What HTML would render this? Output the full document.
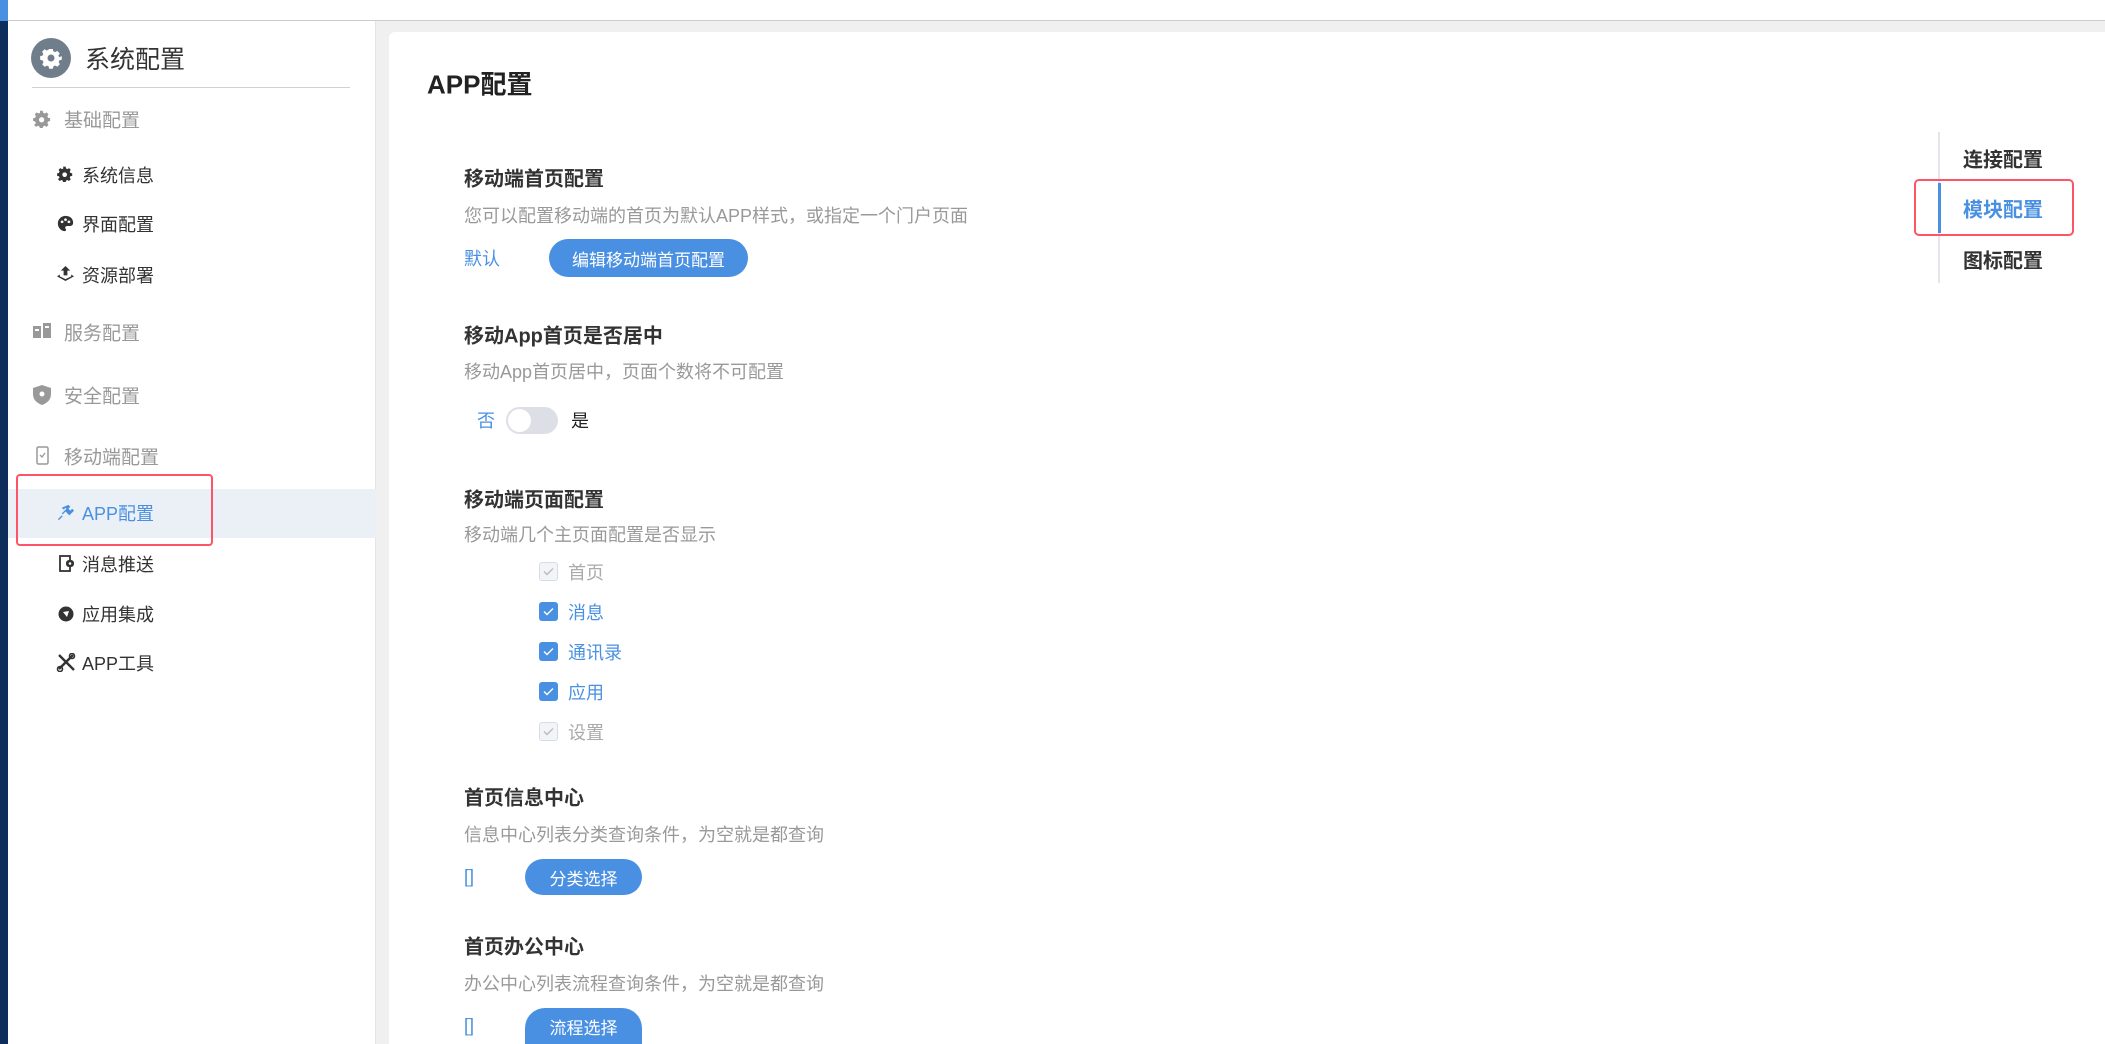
<!DOCTYPE html>
<html><head><meta charset="utf-8"><style>
*{margin:0;padding:0;box-sizing:border-box}
html{width:2105px;height:1044px;overflow:hidden}
body{width:2105px;height:1044px;overflow:hidden;background:#f0f0f0;font-family:"Liberation Sans","Noto Sans CJK SC",sans-serif;position:relative}
.a{position:absolute;white-space:nowrap}
.top{left:0;top:0;width:2105px;height:21px;background:#fff;border-bottom:1px solid #ccc}
.strip{left:0;top:0;width:8px;height:1044px;background:#0d2d5a}
.strip2{left:0;top:0;width:8px;height:21px;background:#4a90e2}
.side{left:8px;top:21px;width:368px;height:1023px;background:#fff;border-right:1px solid #e4e4e4}
.card{left:389px;top:32px;width:1716px;height:1012px;background:#fff;border-radius:6px 0 0 0}
.grp{font-size:19px;color:#999;transform:translateY(-50%)}
.sub{font-size:18px;color:#333;transform:translateY(-50%)}
.h{font-size:20px;font-weight:bold;color:#333;transform:translateY(-50%)}
.d{font-size:18px;color:#999;transform:translateY(-50%)}
.btn{background:#4a90e2;color:#fff;font-size:17px;border-radius:20px;display:flex;align-items:center;justify-content:center}
.cb{width:19px;height:19px;border-radius:3px;left:539px}
.cb.on{background:#4a90e2}
.cb.off{background:#f2f4fa;border:1px solid #d8dce4}
.cl{left:568px;font-size:18px;transform:translateY(-50%)}
.nav{font-size:20px;font-weight:bold;color:#333;transform:translateY(-50%)}
</style></head><body>
<div class="a top"></div>
<div class="a side"></div>
<div class="a strip"></div><div class="a strip2"></div>
<div class="a card"></div>

<div class="a" style="left:31px;top:38px;width:40px;height:40px;border-radius:50%;background:#6f7e8a"></div>
<svg class="a" style="left:39px;top:46px" width="24" height="24" viewBox="0 0 24 24"><path fill="#fff" d="M10 2h4l.6 2.6 2 .9 2.3-1.4 2.8 2.8-1.4 2.3.9 2L24 10v4l-2.6.6-.9 2 1.4 2.3-2.8 2.8-2.3-1.4-2 .9L14 24h-4l-.6-2.6-2-.9-2.3 1.4-2.8-2.8 1.4-2.3-.9-2L0 14v-4l2.6-.6.9-2L2.1 5.1l2.8-2.8 2.3 1.4 2-.9z" transform="scale(.9) translate(1.3 1.3)"/><circle cx="12" cy="12" r="3.5" fill="#6f7e8a"/></svg>
<div class="a" style="left:85px;top:58px;font-size:25px;color:#333;transform:translateY(-50%)">系统配置</div>
<div class="a" style="left:32px;top:87px;width:318px;height:1px;background:#d0d0d0"></div>

<svg class="a" style="left:33px;top:110px" width="18" height="18" viewBox="0 0 24 24"><path fill="#999" d="M10 1h4l.7 3 2.3 1 2.6-1.6 2.8 2.8L20.8 9l1 2.3 3 .7v4l-3 .7-1 2.3 1.6 2.6-2.8 2.8-2.6-1.6-2.3 1-.7 3h-4l-.7-3-2.3-1-2.6 1.6-2.8-2.8L4.2 19l-1-2.3-3-.7v-4l3-.7 1-2.3L2.6 6.2l2.8-2.8L8 5l2.3-1z" transform="scale(.92)"/><circle cx="11.5" cy="13" r="3.5" fill="#fff"/></svg>
<div class="a grp" style="left:64px;top:119px">基础配置</div>
<svg class="a" style="left:57px;top:166px" width="16" height="16" viewBox="0 0 24 24"><path fill="#333" d="M10 1h4l.7 3 2.3 1 2.6-1.6 2.8 2.8L20.8 9l1 2.3 3 .7v4l-3 .7-1 2.3 1.6 2.6-2.8 2.8-2.6-1.6-2.3 1-.7 3h-4l-.7-3-2.3-1-2.6 1.6-2.8-2.8L4.2 19l-1-2.3-3-.7v-4l3-.7 1-2.3L2.6 6.2l2.8-2.8L8 5l2.3-1z" transform="scale(.92)"/><circle cx="11.5" cy="13" r="3.5" fill="#fff"/></svg>
<div class="a sub" style="left:82px;top:175px">系统信息</div>
<svg class="a" style="left:57px;top:215px" width="17" height="17" viewBox="0 0 20 20"><path fill="#333" d="M10 1C5 1 1 5 1 10s4 9 8 9c2 0 2-2 1-3s0-3 2-3h3c3 0 4-2 4-4 0-5-4-8-9-8z"/><circle cx="6" cy="8" r="1.6" fill="#fff"/><circle cx="10" cy="5.5" r="1.6" fill="#fff"/><circle cx="14" cy="8" r="1.6" fill="#fff"/></svg>
<div class="a sub" style="left:82px;top:224px">界面配置</div>
<svg class="a" style="left:56px;top:265px" width="19" height="17" viewBox="0 0 20 18"><path fill="#333" d="M10 1l5 5h-3v5H8V6H5z M1 12l3-2v2l6 3 6-3v-2l3 2-9 5z"/></svg>
<div class="a sub" style="left:82px;top:275px">资源部署</div>
<svg class="a" style="left:33px;top:322px" width="18" height="17" viewBox="0 0 18 17"><rect x="0" y="4" width="8" height="12" fill="#999"/><rect x="10" y="1" width="8" height="15" fill="#999"/><rect x="2" y="7" width="4" height="2" fill="#fff"/><rect x="12" y="4" width="4" height="2" fill="#fff"/></svg>
<div class="a grp" style="left:64px;top:332px">服务配置</div>
<svg class="a" style="left:33px;top:385px" width="18" height="20" viewBox="0 0 18 20"><path fill="#999" d="M9 0l9 3v6c0 6-4 9-9 11C4 18 0 15 0 9V3z"/><circle cx="9" cy="9" r="2.5" fill="#fff"/></svg>
<div class="a grp" style="left:64px;top:395px">安全配置</div>
<svg class="a" style="left:36px;top:446px" width="13" height="19" viewBox="0 0 13 19"><rect x="1" y="1" width="11" height="17" rx="1.5" fill="none" stroke="#999" stroke-width="1.5"/><path d="M4 9l2 2 3-4" stroke="#999" fill="none" stroke-width="1.3"/></svg>
<div class="a grp" style="left:64px;top:456px">移动端配置</div>

<div class="a" style="left:8px;top:489px;width:368px;height:49px;background:#ebf0f7"></div>
<div class="a" style="left:16px;top:474px;width:197px;height:72px;border:2.5px solid #ff5468;border-radius:4px"></div>
<svg class="a" style="left:57px;top:503px" width="19" height="19" viewBox="0 0 20 20"><path fill="#4a90e2" d="M12 2l2 2-2 2 2 2 2-2 2 2-4 4-1 1-4-4-4 4 1 1-4 4-1-1 4-4 1-1-1-1 4-4 1-1-1-1-2 2-2-2z"/></svg>
<div class="a sub" style="left:82px;top:513px;color:#4a90e2">APP配置</div>
<svg class="a" style="left:59px;top:555px" width="16" height="17" viewBox="0 0 16 17"><rect x="1" y="1" width="10" height="15" fill="none" stroke="#333" stroke-width="1.8"/><rect x="7" y="5" width="8" height="7" rx="3" fill="#333"/><circle cx="11" cy="8.5" r="1.3" fill="#fff"/></svg>
<div class="a sub" style="left:82px;top:564px">消息推送</div>
<svg class="a" style="left:58px;top:606px" width="16" height="16" viewBox="0 0 16 16"><circle cx="8" cy="8" r="7.5" fill="#333"/><path d="M5 6l6-1-2 6z" fill="#fff"/></svg>
<div class="a sub" style="left:82px;top:614px">应用集成</div>
<svg class="a" style="left:56px;top:653px" width="20" height="19" viewBox="0 0 20 19"><path stroke="#333" stroke-width="2.4" d="M3 2l15 15M17 2L3 16" fill="none"/><circle cx="4" cy="16" r="2.5" fill="none" stroke="#333" stroke-width="1.6"/><circle cx="16" cy="3" r="2.5" fill="none" stroke="#333" stroke-width="1.6"/></svg>
<div class="a sub" style="left:82px;top:663px">APP工具</div>

<div class="a" style="left:427px;top:83px;font-size:26px;font-weight:bold;color:#222;transform:translateY(-50%)">APP配置</div>

<div class="a h" style="left:464px;top:177px">移动端首页配置</div>
<div class="a d" style="left:464px;top:215px">您可以配置移动端的首页为默认APP样式，或指定一个门户页面</div>
<div class="a d" style="left:464px;top:258px;color:#4a90e2">默认</div>
<div class="a btn" style="left:549px;top:239px;width:199px;height:38px">编辑移动端首页配置</div>

<div class="a h" style="left:464px;top:334px">移动App首页是否居中</div>
<div class="a d" style="left:464px;top:371px">移动App首页居中，页面个数将不可配置</div>
<div class="a d" style="left:477px;top:420px;color:#4a90e2">否</div>
<div class="a" style="left:506px;top:407px;width:52px;height:27px;border-radius:14px;background:#dcdfe6"></div>
<div class="a" style="left:508px;top:409px;width:23px;height:23px;border-radius:50%;background:#fff"></div>
<div class="a d" style="left:571px;top:420px;color:#222">是</div>

<div class="a h" style="left:464px;top:498px">移动端页面配置</div>
<div class="a d" style="left:464px;top:534px">移动端几个主页面配置是否显示</div>

<div class="a cb off" style="top:562px"></div><svg class="a" style="left:543px;top:567px" width="11" height="9" viewBox="0 0 11 9"><path d="M1 4.5l3 3 6-6" stroke="#bbb" stroke-width="1.4" fill="none"/></svg>
<div class="a cl" style="top:572px;color:#aaa">首页</div>
<div class="a cb on" style="top:602px"></div><svg class="a" style="left:543px;top:607px" width="11" height="9" viewBox="0 0 11 9"><path d="M1 4.5l3 3 6-6" stroke="#fff" stroke-width="1.4" fill="none"/></svg>
<div class="a cl" style="top:612px;color:#4a90e2">消息</div>
<div class="a cb on" style="top:642px"></div><svg class="a" style="left:543px;top:647px" width="11" height="9" viewBox="0 0 11 9"><path d="M1 4.5l3 3 6-6" stroke="#fff" stroke-width="1.4" fill="none"/></svg>
<div class="a cl" style="top:652px;color:#4a90e2">通讯录</div>
<div class="a cb on" style="top:682px"></div><svg class="a" style="left:543px;top:687px" width="11" height="9" viewBox="0 0 11 9"><path d="M1 4.5l3 3 6-6" stroke="#fff" stroke-width="1.4" fill="none"/></svg>
<div class="a cl" style="top:692px;color:#4a90e2">应用</div>
<div class="a cb off" style="top:722px"></div><svg class="a" style="left:543px;top:727px" width="11" height="9" viewBox="0 0 11 9"><path d="M1 4.5l3 3 6-6" stroke="#bbb" stroke-width="1.4" fill="none"/></svg>
<div class="a cl" style="top:732px;color:#aaa">设置</div>

<div class="a h" style="left:464px;top:796px">首页信息中心</div>
<div class="a d" style="left:464px;top:834px">信息中心列表分类查询条件，为空就是都查询</div>
<div class="a d" style="left:464px;top:877px;color:#4a90e2">[]</div>
<div class="a btn" style="left:525px;top:859px;width:117px;height:36px">分类选择</div>

<div class="a h" style="left:464px;top:945px">首页办公中心</div>
<div class="a d" style="left:464px;top:983px">办公中心列表流程查询条件，为空就是都查询</div>
<div class="a d" style="left:464px;top:1026px;color:#4a90e2">[]</div>
<div class="a btn" style="left:525px;top:1008px;width:117px;height:36px;border-radius:20px 20px 0 0">流程选择</div>

<div class="a" style="left:1938px;top:132px;width:2px;height:151px;background:#e2e5ea"></div>
<div class="a" style="left:1938px;top:183px;width:3px;height:50px;background:#4a90e2"></div>
<div class="a nav" style="left:1963px;top:158px">连接配置</div>
<div class="a nav" style="left:1963px;top:208px;color:#4a90e2">模块配置</div>
<div class="a nav" style="left:1963px;top:259px">图标配置</div>
<div class="a" style="left:1914px;top:179px;width:160px;height:57px;border:2.5px solid #ff5468;border-radius:5px"></div>
</body></html>
